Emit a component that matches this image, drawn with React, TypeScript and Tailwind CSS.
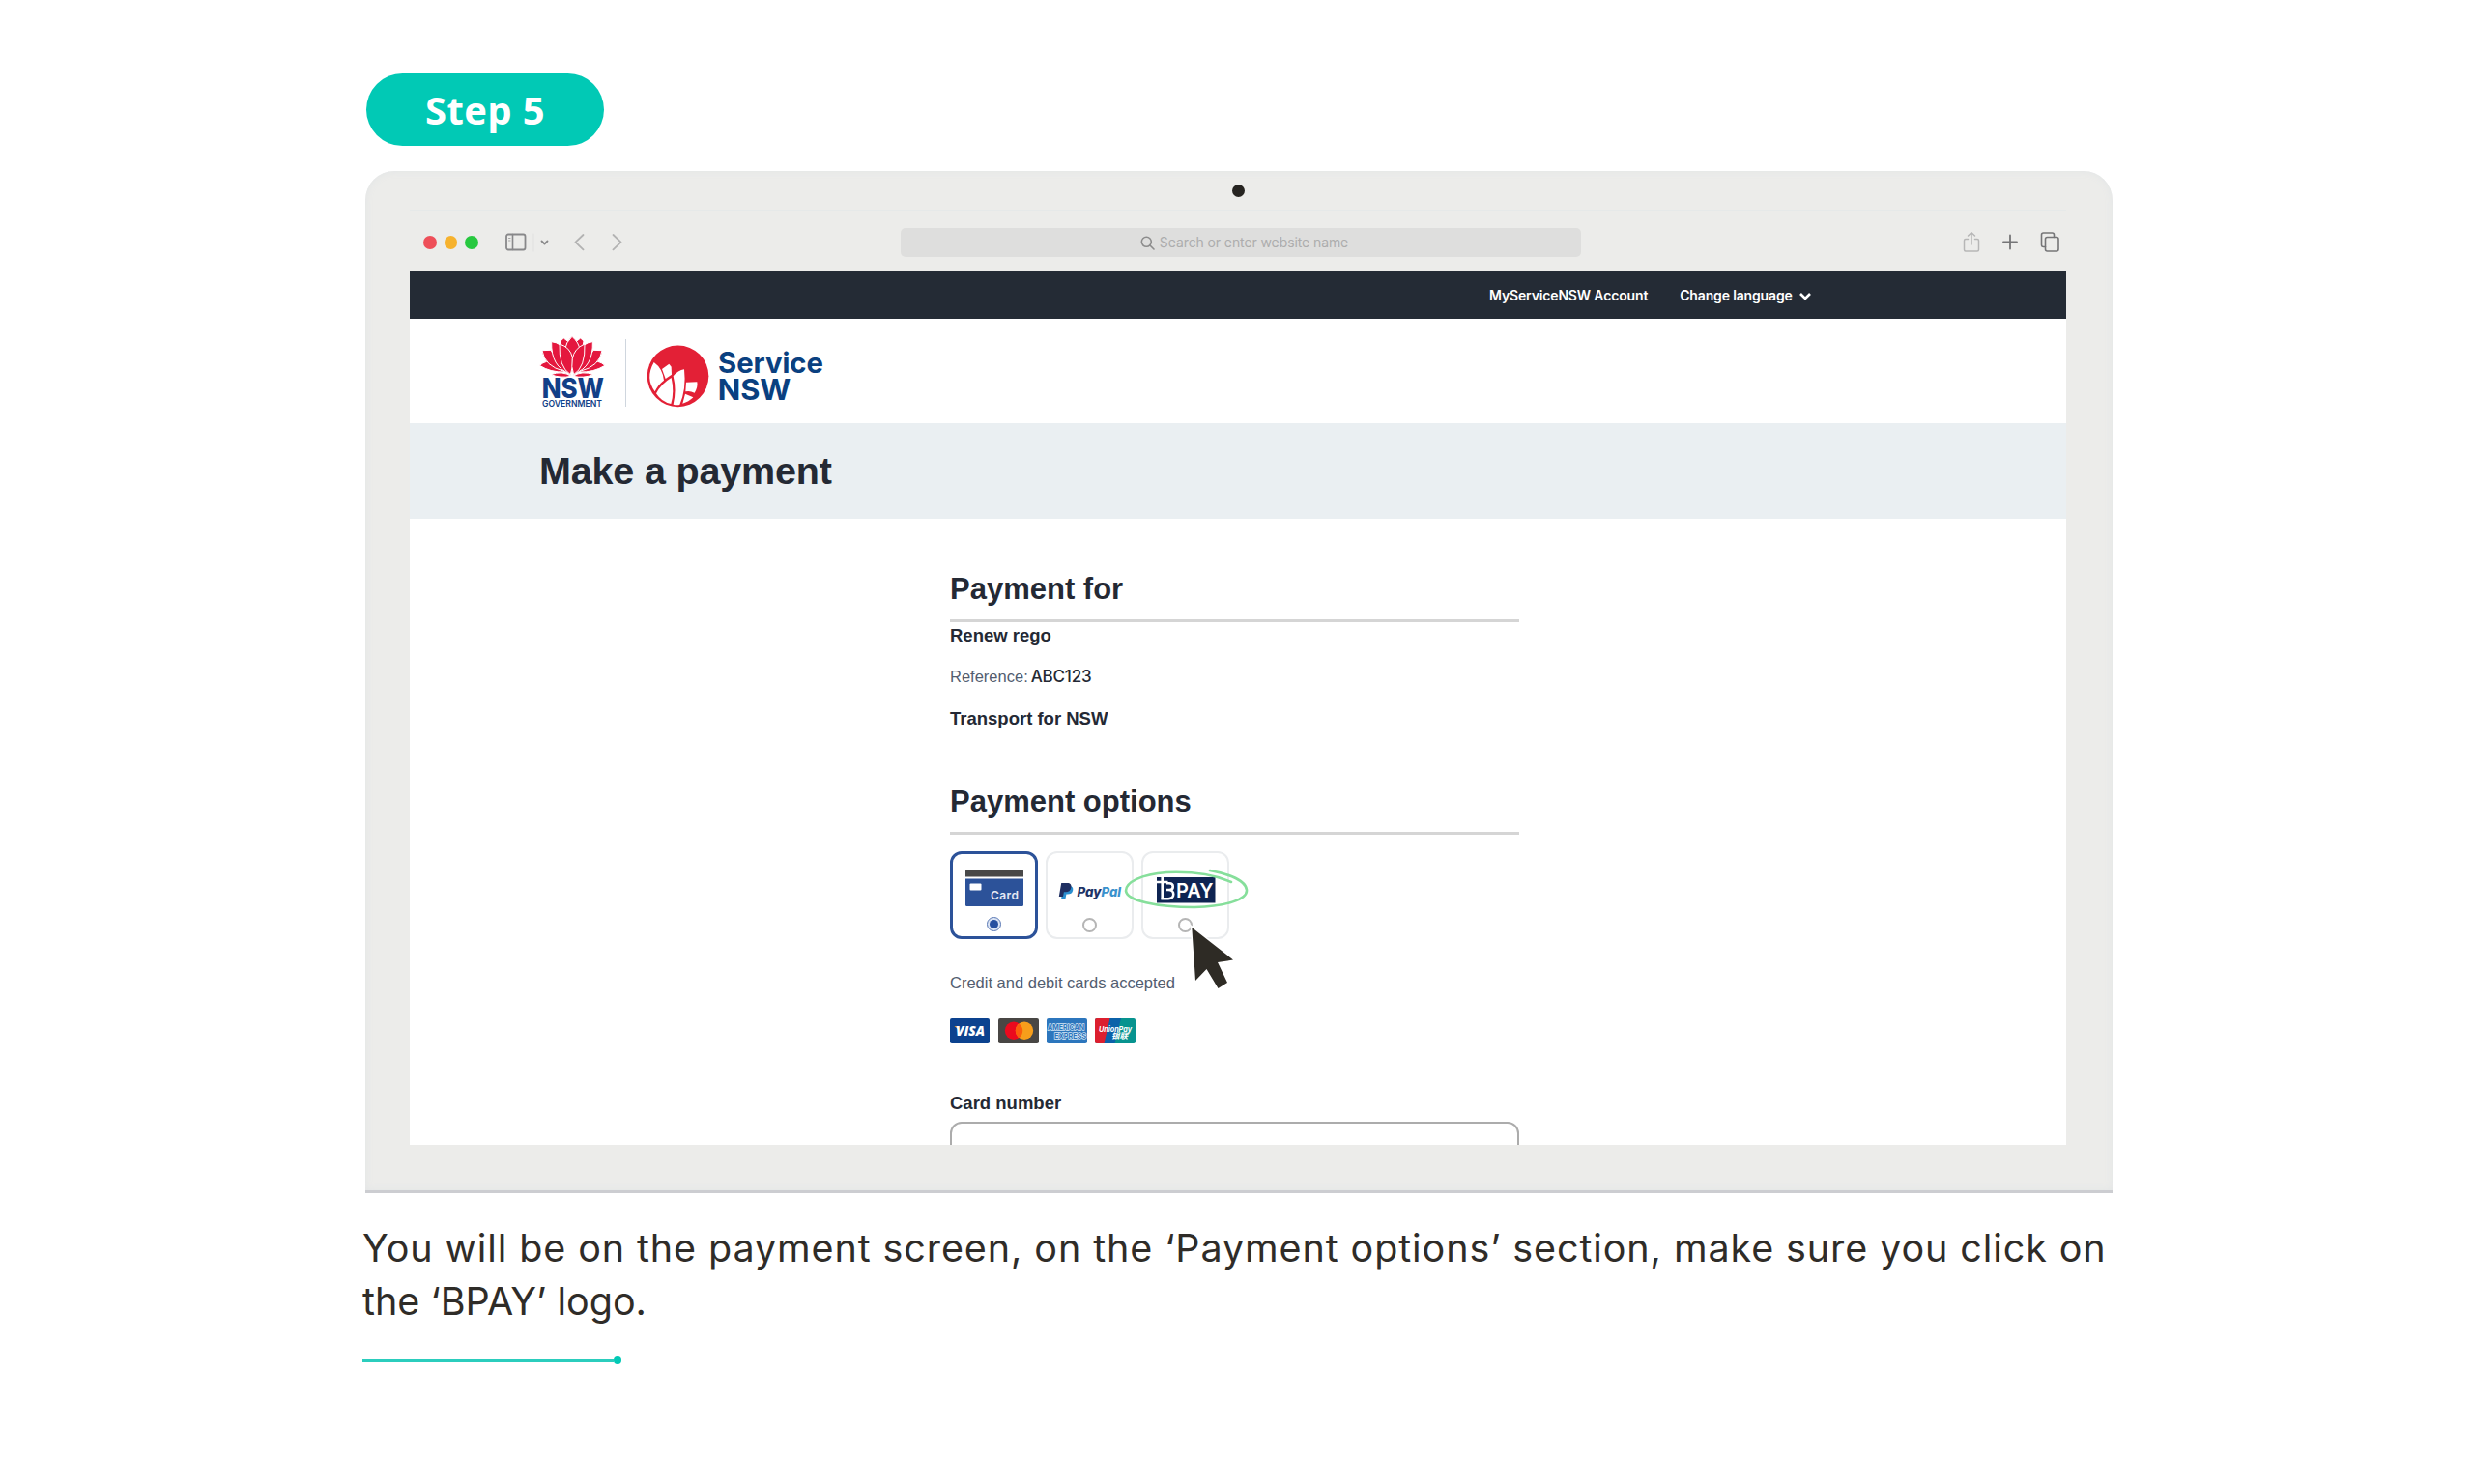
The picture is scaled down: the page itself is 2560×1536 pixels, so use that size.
function NswGovernmentLogo() {
  return (
    <svg viewBox="54 54 207 222" className="h-[74px] w-[69px] overflow-visible">
      <g fill="#e4173e" stroke="#fff" strokeWidth="3" strokeLinejoin="round">
        <path d="M120 69 L130 60 L143 70 L137 94 L123 86z" />
        <path d="M192 69 L182 60 L169 70 L175 94 L189 86z" />
        <path d="M55 145 Q75 127 100 134 L134 165 Q90 167 55 145z" />
        <path d="M258 145 Q238 127 213 134 L178 165 Q222 167 258 145z" />
        <path d="M63 98 L90 97 Q108 130 132 163 Q70 148 63 98z" />
        <path d="M249 98 L222 97 Q204 130 180 163 Q242 148 249 98z" />
        <path d="M92 71 Q108 73 119 81 Q122 130 149 170 Q90 150 92 71z" />
        <path d="M220 71 Q204 73 193 81 Q190 130 163 170 Q222 150 220 71z" />
        <path d="M156 55 Q178 75 179 94 L156 132 L134 94 Q136 74 156 55z" />
        <path d="M117 78 Q150 88 157 120 Q160 148 151 173 Q114 150 117 78z" />
        <path d="M195 78 Q162 92 157 124 Q152 148 161 173 Q198 150 195 78z" />
        <path d="M90 173 Q125 160 153 178 Q120 185 90 173z" />
        <path d="M222 173 Q187 160 159 178 Q192 185 222 173z" />
      </g>
      <g fill="#123f87" fontFamily="Inter, sans-serif">
        <text x="62" y="246" fontSize="84" fontWeight="800" textLength="193" lengthAdjust="spacingAndGlyphs">
          NSW
        </text>
        <text x="63" y="273" fontSize="27" fontWeight="600" textLength="186" lengthAdjust="spacingAndGlyphs">
          GOVERNMENT
        </text>
      </g>
    </svg>
  );
}

function ServiceNswLogo() {
  return (
    <svg viewBox="387 81 555 195" className="h-[65px] w-[185px] overflow-visible">
      <circle cx="484.500" cy="178" r="95.500" fill="#e32036" />
      <g fill="#fff">
        <path d="M410 135 Q437 154 441 191 Q422 205 413 226 Q382 184 410 135z" />
        <path d="M435 156 L457 140 L464 149 L465 173 L446 186z" />
        <path d="M464 183 Q432 202 417 232 Q434 259 463 264 Q474 226 464 183z" />
        <path d="M504 157 Q485 160 470 178 Q481 222 470 266 Q480 269 490 267 Q511 218 504 157z" />
        <path d="M510 197 L544 196 Q547 212 536 230 Q521 222 508 226z" />
        <path d="M507 233 L532 244 Q518 258 499 263z" />
      </g>
      <g fill="#0a4080" fontFamily="Inter, sans-serif" fontWeight="700">
        <text x="609" y="169" fontSize="88" textLength="327" lengthAdjust="spacingAndGlyphs">
          Service
        </text>
        <text x="608" y="251" fontSize="88" textLength="227" lengthAdjust="spacingAndGlyphs">
          NSW
        </text>
      </g>
    </svg>
  );
}

function BrowserToolbar() {
  return (
    <div className="flex h-[63px] items-center pt-[3px] pl-[14px] pr-[6px]">
      <div className="flex w-[57px] gap-2">
        <span className="size-3.5 rounded-full bg-[#ee4f59]" />
        <span className="size-3.5 rounded-full bg-[#f6b22e]" />
        <span className="size-3.5 rounded-full bg-[#27c83f]" />
      </div>
      <svg viewBox="0 0 126 20" className="ml-[26px] h-5 w-[126px]" fill="none" strokeLinecap="round" strokeLinejoin="round">
        <rect x="3" y="1.500" width="19.500" height="16" rx="2" stroke="#88888a" strokeWidth="1.800" />
        <path d="M9.500 1.500v16" stroke="#88888a" strokeWidth="1.600" />
        <path d="M5.500 5.500h1.500M5.500 8h1.500M5.500 10.500h1.500" stroke="#a5a5a6" strokeWidth="1" />
        <path d="M31 1v18" stroke="#e0e0df" strokeWidth="1" />
        <path d="M39.500 8.500l3 3 3-3" stroke="#88888a" strokeWidth="1.800" />
        <path d="M82.500 2l-8 7.700 8 7.700" stroke="#b2b2b2" strokeWidth="1.800" />
        <path d="M113.500 2l8 7.700-8 7.700" stroke="#b2b2b2" strokeWidth="1.800" />
      </svg>
      <div className="ml-[285px] flex h-[30px] w-[704px] items-center justify-center gap-[5px] rounded-[5px] bg-[#dededd] pl-[7px]">
        <svg viewBox="0 0 15 15" className="size-[15px]" fill="none" stroke="#8c8c8c" strokeWidth="1.600" strokeLinecap="round">
          <circle cx="6.300" cy="6.300" r="5" />
          <path d="M10 10l4 4" />
        </svg>
        <span className="font-[Inter] text-[14px] leading-5 tracking-[-0.1px] text-[#adadad]">Search or enter website name</span>
      </div>
      <svg viewBox="0 0 102 24" className="ml-auto h-6 w-[102px]" fill="none" strokeLinecap="round" strokeLinejoin="round">
        <g stroke="#b6b6b6" strokeWidth="1.500">
          <path d="M6.500 8.500H4a1.500 1.500 0 0 0-1.500 1.500v9.500A1.500 1.500 0 0 0 4 21h12a1.500 1.500 0 0 0 1.500-1.500V10A1.500 1.500 0 0 0 16 8.500h-2.500" />
          <path d="M10 14V2M6.500 5L10 1.800 13.500 5" />
        </g>
        <path d="M43 11.500h14M50 4.500v14" stroke="#757577" strokeWidth="1.800" />
        <g stroke="#757577" strokeWidth="1.600">
          <rect x="86.500" y="6.500" width="13.500" height="14.500" rx="2" />
          <path d="M86.500 16.500h-2a2 2 0 0 1-2-2V4a2 2 0 0 1 2-2h9a2 2 0 0 1 2 2v2.500" />
        </g>
      </svg>
    </div>
  );
}

function Radio({ checked = false }: { checked?: boolean }) {
  return checked ? (
    <span className="flex size-[15px] items-center justify-center rounded-full border border-[#5c7ab5] bg-[#dbe4f4]">
      <span className="size-[9px] rounded-full bg-[#2650a0]" />
    </span>
  ) : (
    <span className="block size-[15px] rounded-full border-2 border-[#b5b5b5] bg-white" />
  );
}

function CardIcon() {
  return (
    <svg viewBox="0 0 60 38" className="h-[38px] w-[60px] shrink-0">
      <path d="M1.500 0h57a1.500 1.500 0 0 1 1.500 1.500V7.500H0V1.500A1.500 1.500 0 0 1 1.500 0z" fill="#484848" />
      <path d="M0 9.500h60v27a1.500 1.500 0 0 1-1.500 1.500h-57a1.500 1.500 0 0 1-1.500-1.500z" fill="#2c5299" />
      <rect x="4.500" y="14.500" width="12" height="7" rx="1" fill="#fff" />
      <text x="26" y="31" fontFamily="Inter, sans-serif" fontSize="12" fontWeight="600" fill="#e3e9f4" textLength="29">
        Card
      </text>
    </svg>
  );
}

function PayPalLogo() {
  return (
    <svg viewBox="0 0 66 20" className="h-5 w-[66px] shrink-0">
      <path d="M5 5h6.500c3 0 4.300 1.800 3.700 4.500-.7 3-2.600 4-5.400 4H8.400L7.500 18H3.200z" fill="#2a8fd0" />
      <path d="M3.200 2h6.300c3 0 4.500 1.700 3.900 4.700-.6 3.200-2.700 4.500-5.600 4.500H5.900L5 16H.8z" fill="#1f2f62" />
      <g fontFamily="Inter, sans-serif" fontSize="13" fontWeight="800" fontStyle="italic">
        <text x="19.500" y="15.500" fill="#1f3467" textLength="25" lengthAdjust="spacingAndGlyphs">
          Pay
        </text>
        <text x="44.500" y="15.500" fill="#3a92cd" textLength="20.500" lengthAdjust="spacingAndGlyphs">
          Pal
        </text>
      </g>
    </svg>
  );
}

function BpayLogo() {
  return (
    <svg viewBox="0 0 62 28" className="h-7 w-[62px] shrink-0">
      <rect x="1" y="1" width="60.500" height="26.500" fill="#0e2452" />
      <g fill="none" stroke="#fff" strokeWidth="2.600">
        <path d="M0 6h12.500M6.700 0v22.500" />
        <path d="M11 7.300h3c5 0 5 6.700 0 6.700h-3M13 14c7 0 7 9.200 0 9.200H5.400" />
      </g>
      <text x="21" y="21.700" fontFamily="Inter, sans-serif" fontSize="20.500" fontWeight="600" fill="#fff" textLength="38.500" lengthAdjust="spacingAndGlyphs">
        PAY
      </text>
    </svg>
  );
}

function AcceptedCards() {
  return (
    <div className="mt-[25px] flex gap-2">
      <svg viewBox="0 0 42 26" className="h-[26px] w-[42px]">
        <rect width="41" height="26" rx="2" fill="#0c428f" />
        <path d="M4.500 8h4l2 5z" fill="#f0a52a" />
        <text x="6" y="17.500" fontFamily="Open Sans, sans-serif" fontSize="13.500" fontWeight="800" fontStyle="italic" fill="#fff" textLength="30" lengthAdjust="spacingAndGlyphs">
          VISA
        </text>
      </svg>
      <svg viewBox="0 0 42 26" className="h-[26px] w-[42px]">
        <rect width="42" height="26" rx="2" fill="#484644" />
        <circle cx="16" cy="12.800" r="9.200" fill="#eb0a1e" />
        <circle cx="27" cy="12.800" r="9.200" fill="#f79e1b" />
        <path d="M21.500 5.400a9.200 9.200 0 0 1 0 14.800a9.200 9.200 0 0 1 0-14.800z" fill="#fb5d0c" />
      </svg>
      <svg viewBox="0 0 42 26" className="h-[26px] w-[42px] overflow-visible">
        <rect width="42" height="26" rx="2" fill="#2c76bd" />
        <g fontFamily="Inter, sans-serif" fontSize="8" fontWeight="700" fill="#2c76bd" stroke="#d5e6f5" strokeWidth="1.300" paintOrder="stroke">
          <text x="1" y="12" textLength="38" lengthAdjust="spacingAndGlyphs">
            AMERICAN
          </text>
          <text x="8" y="21" textLength="33" lengthAdjust="spacingAndGlyphs">
            EXPRESS
          </text>
        </g>
      </svg>
      <svg viewBox="0 0 42 26" className="h-[26px] w-[42px]">
        <rect width="42" height="26" rx="2" fill="#07938f" />
        <path d="M2 0H16L10 26H2a2 2 0 0 1-2-2V2a2 2 0 0 1 2-2z" fill="#dc1f2f" />
        <path d="M15.500 0H27L20.500 26H9.500z" fill="#0b61a9" />
        <g fill="#fff" fontWeight="700" fontStyle="italic">
          <text x="4" y="13.500" fontFamily="Inter, sans-serif" fontSize="8" textLength="34" lengthAdjust="spacingAndGlyphs">
            UnionPay
          </text>
          <text x="17" y="21" fontFamily="Noto Sans CJK SC, sans-serif" fontSize="8" textLength="17" lengthAdjust="spacingAndGlyphs">
            银联
          </text>
        </g>
      </svg>
    </div>
  );
}

function PaymentOptions() {
  return (
    <div className="relative mt-[17px] flex gap-2">
      <div className="flex h-[91px] w-[91px] flex-col items-center rounded-xl border-[3px] border-[#2c5299] pt-4">
        <CardIcon />
        <div className="mt-[11px]">
          <Radio checked />
        </div>
      </div>
      <div className="flex h-[91px] w-[91px] flex-col items-center rounded-xl border-2 border-[#eaecee] pt-[29px]">
        <PayPalLogo />
        <div className="mt-[18px]">
          <Radio />
        </div>
      </div>
      <div className="flex h-[91px] w-[91px] flex-col items-center rounded-xl border-2 border-[#eaecee] pt-6">
        <BpayLogo />
        <div className="mt-[15px]">
          <Radio />
        </div>
      </div>

      {/* hand-drawn highlight and cursor over the BPAY option */}
      <svg viewBox="0 0 140 150" className="absolute top-[15px] left-[178px] h-[150px] w-[140px]">
        <path
          d="M113 17C95 9 70 6 46 7C20 9 4 17 4 26C5 36 35 43 75 43C108 42 130 35 129 25C128 16 112 9 91 5"
          fill="none"
          stroke="#86df9b"
          strokeWidth="2.600"
          strokeLinecap="round"
        />
        <path
          d="M72.300 64L115 97.500L99 100L109 121L99.500 127L87.500 107L76 119z"
          fill="#2e2b25"
          stroke="#fff"
          strokeWidth="3"
          paintOrder="stroke"
        />
      </svg>
    </div>
  );
}

function PaymentPage() {
  return (
    <div className="h-[904px] overflow-hidden bg-white text-[#242934]">
      <nav className="flex h-[49px] items-center bg-[#242b35] pl-[1117px] font-[Inter] text-[14px] font-semibold tracking-[-0.15px] text-white">
        <span>MyServiceNSW Account</span>
        <span className="ml-[33px]">Change language</span>
        <svg viewBox="0 0 14 10" className="mt-0.5 ml-1.5 h-[10px] w-[14px]" fill="none" stroke="#fff" strokeWidth="2.600">
          <path d="M2 2l5 5 5-5" />
        </svg>
      </nav>
      <header className="flex h-[108px] items-start pt-[18px] pl-[134px]">
        <NswGovernmentLogo />
        <span className="mt-[3px] ml-5 h-[70px] w-px bg-[#cfd6de]" />
        <div className="mt-[9px] ml-[21px]">
          <ServiceNswLogo />
        </div>
      </header>
      <div className="flex h-[99px] items-center bg-[#eaeff2] pl-[134px]">
        <h1 className="text-[39.500px] font-bold tracking-[-0.18px]">Make a payment</h1>
      </div>
      <main className="ml-[559px] w-[589px] pt-[53px]">
        <h2 className="border-b-[3px] border-[#d5d5d5] pb-[11px] text-[31px] leading-10 font-bold">Payment for</h2>
        <p className="text-[18.500px] leading-7 font-bold">Renew rego</p>
        <p className="mt-[14px] flex gap-[3px] text-[16.500px] leading-7 text-[#525d70]">
          <span>Reference:</span>
          <span className="font-[Inter] text-[17px] font-medium tracking-[-0.2px] text-[#242934]">ABC123</span>
        </p>
        <p className="mt-4 text-[18.500px] leading-7 font-bold">Transport for NSW</p>
        <h2 className="mt-[52px] border-b-[3px] border-[#d5d5d5] pb-[11px] text-[31px] leading-10 font-bold">Payment options</h2>
        <PaymentOptions />
        <p className="mt-[33px] text-[16.500px] leading-6 text-[#525d70]">Credit and debit cards accepted</p>
        <AcceptedCards />
        <p className="mt-[50px] text-[18.500px] leading-6 font-bold">Card number</p>
        <div className="mt-[7px] h-[60px] rounded-xl border-2 border-[#acacac]" />
      </main>
    </div>
  );
}

export default function App() {
  return (
    <div className="h-[1536px] w-[2560px] overflow-hidden bg-white pt-[76px] font-['Liberation_Sans',Arial,sans-serif]">
      <div className="ml-[379px] flex h-[75px] w-[246px] items-center justify-center rounded-full bg-[#01c9b5] font-['Open_Sans',sans-serif] text-[40px] font-bold tracking-[0.4px] text-white">
        Step 5
      </div>

      <div className="mt-[26px] ml-[378px] h-[1058px] w-[1808px] rounded-t-[30px] border-b-[3px] border-[#cccdd1] bg-[#ececea] pr-[48px] pl-[46px] shadow-[inset_0_0_8px_#e2e5e6]">
        <div className="flex h-[41px] items-center justify-center border-b border-[#e6e9e9]">
          <span className="size-[13px] rounded-full bg-[#262421]" />
        </div>
        <BrowserToolbar />
        <PaymentPage />
      </div>

      <div className="mt-[30px] ml-[375px] w-[1900px] font-[Inter] text-[39.500px] leading-[54.500px] text-[#2f2c28]">
        <p className="tracking-[0.9px]">
          You will be on the payment screen, on the ‘Payment options’ section, make sure you click on
        </p>
        <p>the ‘BPAY’ logo.</p>
      </div>

      <div className="mt-[30px] ml-[375px] flex items-center">
        <span className="h-[3px] w-[260px] bg-[#2bcdbd]" />
        <span className="size-2 rounded-full bg-[#01c9b5]" />
      </div>
    </div>
  );
}
